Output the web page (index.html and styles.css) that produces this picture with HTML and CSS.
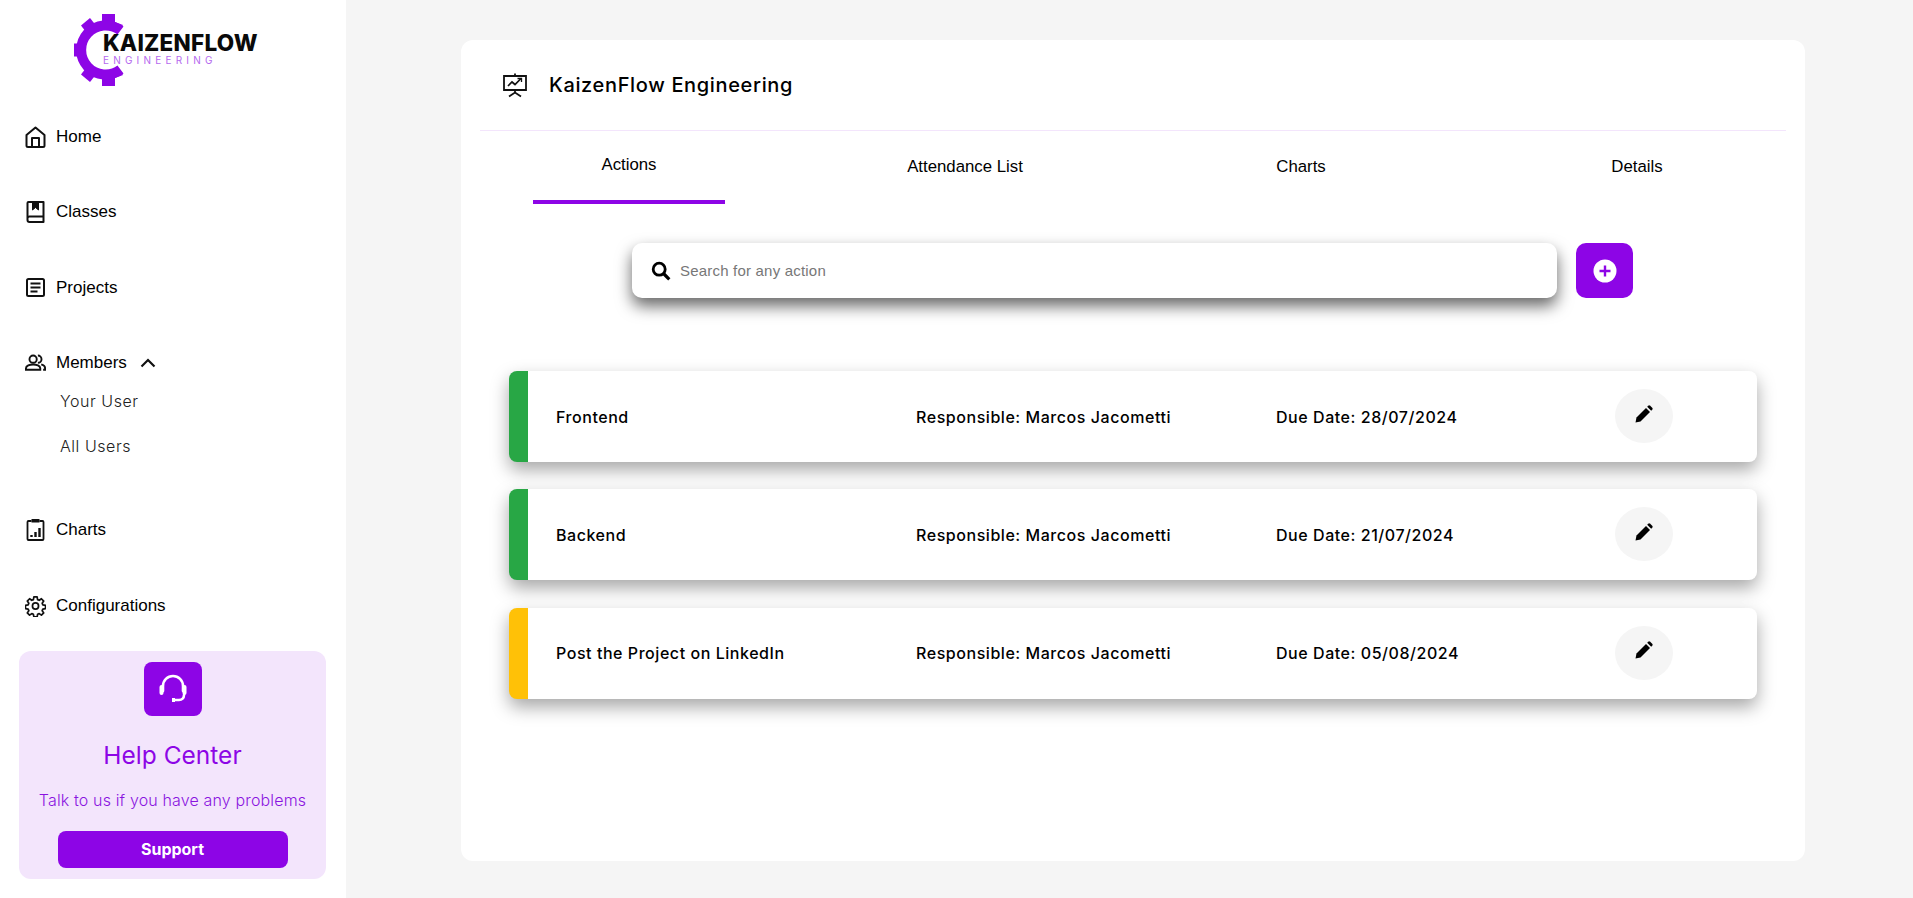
FILE: index.html

```html
<!DOCTYPE html>
<html lang="en">
<head>
  <meta charset="UTF-8" />
  <title>KaizenFlow Engineering</title>
  <link rel="stylesheet" href="styles.css">
</head>
<body>

  <aside class="sidebar">
    <div class="logo">
      <svg class="logo-gear" width="70" height="72" viewBox="0 0 70 72">
        <g fill="#8d05e6">
          <path d="M28 0h13v10H28z"/>
          <path d="M28 62h13v10H28z"/>
          <path d="M0 29.500h10v13H0z"/>
          <path d="M6 7.500l9-7.500 8 10-9 8z" transform="translate(1 4)"/>
          <path d="M6 64.500l9 7.500 8-10-9-8z" transform="translate(1 -4)"/>
          <path d="M41 8l8 3 -4 6-6-2z"/>
          <path d="M41 64l8-3-4-6-6 2z"/>
        </g>
        <path d="M46.500 16.500A24.500 24.500 0 1 0 46.500 55.500" fill="none" stroke="#8d05e6" stroke-width="10"/>
      </svg>
      <div class="logo-text">
        <span class="logo-name">KAIZENFLOW</span>
        <span class="logo-sub">ENGINEERING</span>
      </div>
    </div>

    <nav class="nav">
      <a class="nav-item">
        <svg class="nav-icon" viewBox="0 0 20 22" fill="none" stroke="#111" stroke-width="2" stroke-linejoin="round"><path d="M1 9 10 1.500 19 9v10.500a1.500 1.500 0 0 1-1.500 1.500h-15A1.500 1.500 0 0 1 1 19.500z"/><path d="M6.500 21v-9h7v9"/></svg>
        Home
      </a>
      <a class="nav-item">
        <svg class="nav-icon" viewBox="0 0 20 22" fill="none" stroke="#111" stroke-width="2" stroke-linejoin="round"><path d="M2 17V2a1 1 0 0 1 1-1h15v20H4a2 2 0 0 1-2-2v-2a2 2 0 0 1 2-1.500h14"/><path d="M7 1v8l3-2.500L13 9V1" fill="#111" stroke-width="1"/></svg>
        Classes
      </a>
      <a class="nav-item">
        <svg class="nav-icon" viewBox="0 0 20 22" fill="none" stroke="#111" stroke-width="2"><rect x="1.500" y="2" width="17" height="17" rx="1.500"/><path d="M5 6.500h10M5 10.500h10M5 14.500h7"/></svg>
        Projects
      </a>
      <a class="nav-item nav-members">
        <svg class="nav-icon" viewBox="0 0 22 20" fill="none" stroke="#111" stroke-width="2"><circle cx="8.500" cy="6" r="3.800"/><path d="M1 17v-1.500c0-2.500 4-4 7.500-4s7.500 1.500 7.500 4V17z"/><path d="M13.500 2.200a3.800 3.800 0 0 1 0 7.600"/><path d="M17 11.500c2 .6 4 1.800 4 3.500v2h-2"/></svg>
        Members
        <svg class="chevron" width="16" height="10" viewBox="0 0 16 10" fill="none" stroke="#111" stroke-width="2.200"><path d="M1.500 8.500 8 2l6.500 6.500"/></svg>
      </a>
      <div class="subnav">
        <a class="subnav-item">Your User</a>
        <a class="subnav-item">All Users</a>
      </div>
      <a class="nav-item nav-charts">
        <svg class="nav-icon" viewBox="0 0 20 22" fill="none" stroke="#111" stroke-width="1.800"><path d="M6 2H3a1 1 0 0 0-1 1v17a1 1 0 0 0 1 1h14a1 1 0 0 0 1-1V3a1 1 0 0 0-1-1h-3"/><rect x="6" y="0" width="8" height="3.500" fill="#111" stroke="none"/><path d="M6 18v-2M10 18v-5M14 18V9" stroke-width="2.400"/></svg>
        Charts
      </a>
      <a class="nav-item">
        <svg class="nav-icon" viewBox="1 1 22 22" fill="none" stroke="#111" stroke-width="1.800" stroke-linejoin="round"><circle cx="12" cy="12" r="3.200"/><path d="M10.300 2.500h3.400l.5 2.800 1.700.7 2.300-1.600 2.400 2.400-1.600 2.300.7 1.700 2.800.5v3.400l-2.800.5-.7 1.700 1.600 2.300-2.400 2.400-2.300-1.600-1.700.7-.5 2.800h-3.400l-.5-2.800-1.700-.7-2.300 1.600-2.400-2.400 1.600-2.300-.7-1.700-2.800-.5v-3.400l2.800-.5.7-1.700-1.600-2.300 2.400-2.400 2.300 1.600 1.700-.7z"/></svg>
        Configurations
      </a>
    </nav>

    <div class="help">
      <div class="help-icon">
        <svg width="32" height="32" viewBox="0 0 32 32" fill="none" stroke="#fff" stroke-width="2.600" stroke-linecap="round"><path d="M6 18v-5a10 10 0 0 1 20 0v5"/><path d="M4.500 14v6M27.500 14v6" stroke-width="4"/><path d="M27 22c0 3-2 5-5 5h-4"/><path d="M15 27h3" stroke-width="4" stroke-linecap="butt"/></svg>
      </div>
      <h3 class="help-title">Help Center</h3>
      <p class="help-text">Talk to us if you have any problems</p>
      <button class="help-btn">Support</button>
    </div>
  </aside>

  <main class="main">
    <section class="card">
      <header class="card-head">
        <svg class="card-icon" width="26" height="26" viewBox="0 0 26 26" fill="none" stroke="#111" stroke-width="1.800"><path d="M2 4h22v14H2z"/><path d="M13 4V1.500M13 18v2M7 24.500l6-4 6 4"/><path d="M6 14l4-4 3 2.500 6-6" stroke-width="1.700"/><path d="M15.500 6.500H19.500V10" stroke-width="1.300"/></svg>
        <h1 class="card-title">KaizenFlow Engineering</h1>
      </header>

      <div class="tabs">
        <a class="tab tab-active">Actions</a>
        <a class="tab">Attendance List</a>
        <a class="tab">Charts</a>
        <a class="tab">Details</a>
      </div>

      <div class="search-row">
        <label class="search">
          <svg width="20" height="20" viewBox="0 0 20 20" fill="none" stroke="#000" stroke-width="2.800"><circle cx="8.200" cy="8.200" r="6"/><path d="M12.500 12.500l5.800 5.800" stroke-width="3.200"/></svg>
          <input type="text" placeholder="Search for any action" />
        </label>
        <button class="add-btn">
          <svg width="24" height="24" viewBox="0 0 24 24"><circle cx="12" cy="12" r="11.500" fill="#fff"/><path d="M12 6.500v11M6.500 12h11" stroke="#8d05e6" stroke-width="2.400"/></svg>
        </button>
      </div>

      <div class="actions">
        <div class="action action-done">
          <span class="action-name">Frontend</span>
          <span class="action-resp">Responsible: Marcos Jacometti</span>
          <span class="action-due">Due Date: 28/07/2024</span>
          <button class="edit-btn"><svg width="18" height="18" viewBox="0 0 18 18"><path d="M0.500 17.500l1-5L11 3l4 4-9.500 9.500z"/><path d="M12.200 1.800l1-1a1.500 1.500 0 0 1 2 0l2 2a1.500 1.500 0 0 1 0 2l-1 1z"/></svg></button>
        </div>
        <div class="action action-done">
          <span class="action-name">Backend</span>
          <span class="action-resp">Responsible: Marcos Jacometti</span>
          <span class="action-due">Due Date: 21/07/2024</span>
          <button class="edit-btn"><svg width="18" height="18" viewBox="0 0 18 18"><path d="M0.500 17.500l1-5L11 3l4 4-9.500 9.500z"/><path d="M12.200 1.800l1-1a1.500 1.500 0 0 1 2 0l2 2a1.500 1.500 0 0 1 0 2l-1 1z"/></svg></button>
        </div>
        <div class="action action-pending">
          <span class="action-name">Post the Project on LinkedIn</span>
          <span class="action-resp">Responsible: Marcos Jacometti</span>
          <span class="action-due">Due Date: 05/08/2024</span>
          <button class="edit-btn"><svg width="18" height="18" viewBox="0 0 18 18"><path d="M0.500 17.500l1-5L11 3l4 4-9.500 9.500z"/><path d="M12.200 1.800l1-1a1.500 1.500 0 0 1 2 0l2 2a1.500 1.500 0 0 1 0 2l-1 1z"/></svg></button>
        </div>
      </div>
    </section>
  </main>

</body>
</html>
```

FILE: styles.css

```css
* {
  box-sizing: border-box;
}

body {
  margin: 0;
  height: 100vh;
  overflow: hidden;
  display: flex;
  font-family: 'Inter', 'Open Sans', sans-serif;
  background: #f5f5f5;
  color: #000;
}

.sidebar {
  width: 346px;
  flex-shrink: 0;
  background: #fff;
  display: flex;
  flex-direction: column;
}

.logo {
  height: 125px;
  padding: 14px 0 0 74px;
  display: flex;
  align-items: flex-start;
}

.logo-gear {
  flex-shrink: 0;
}

.logo-text {
  margin-left: -41px;
  padding-top: 18px;
  display: flex;
  flex-direction: column;
}

.logo-name {
  font-size: 22.500px;
  font-weight: 800;
  line-height: 22px;
  color: #0a0a0a;
  letter-spacing: 0.250px;
}

.logo-sub {
  font-size: 10px;
  line-height: 12px;
  color: #b569ee;
  letter-spacing: 4.200px;
}

.nav {
  padding-left: 25px;
  display: flex;
  flex-direction: column;
  font-family: 'Liberation Sans', Arial, sans-serif;
  font-size: 17px;
}

.nav-item {
  height: 24px;
  margin-bottom: 51.400px;
  display: flex;
  align-items: center;
  gap: 10px;
  color: #000;
}

.nav-icon {
  width: 21px;
  height: 22px;
  flex-shrink: 0;
}

.nav-members {
  margin-bottom: 14px;
}

.chevron {
  margin-left: 3px;
}

.subnav {
  padding-left: 35px;
  display: flex;
  flex-direction: column;
  gap: 21px;
  font-family: 'Inter', sans-serif;
  font-size: 16px;
  font-weight: 300;
  letter-spacing: 0.550px;
  color: #222;
}

.subnav-item {
  line-height: 24px;
}

.nav-charts {
  margin-top: 60px;
}

.nav .nav-item:last-child {
  margin-bottom: 33px;
}

.help {
  width: 307px;
  height: 228px;
  margin-left: 19px;
  padding-top: 11px;
  border-radius: 12px;
  background: #f3e5fc;
  display: flex;
  flex-direction: column;
  align-items: center;
  color: #8d05e6;
}

.help-icon {
  width: 58px;
  height: 54px;
  border-radius: 8px;
  background: #8d05e6;
  display: flex;
  align-items: center;
  justify-content: center;
}

.help-title {
  margin: 20px 0 0;
  font-size: 24.500px;
  line-height: 38px;
  font-weight: 400;
}

.help-text {
  margin: 13px 0 0;
  font-size: 16px;
  line-height: 26px;
  font-weight: 300;
  letter-spacing: 0.150px;
  color: #8a14e0;
  white-space: nowrap;
}

.help-btn {
  width: 230px;
  height: 37px;
  margin-top: 18px;
  border: none;
  border-radius: 8px;
  background: #8d05e6;
  color: #fff;
  font-family: 'Inter', sans-serif;
  font-size: 16px;
  font-weight: 700;
}

.main {
  flex: 1;
  padding: 40px 108px 37px 115px;
  display: flex;
}

.card {
  flex: 1;
  background: #fff;
  border-radius: 12px;
}

.card-head {
  height: 91px;
  margin: 0 19px;
  padding: 0 0 0 22px;
  display: flex;
  align-items: center;
  gap: 21px;
  border-bottom: 1px solid #f3e5fc;
}

.card-title {
  margin: 0;
  font-size: 20px;
  font-weight: 500;
  letter-spacing: 0.650px;
}

.tabs {
  display: grid;
  grid-template-columns: repeat(4, 1fr);
  height: 73px;
  font-family: 'Liberation Sans', Arial, sans-serif;
  font-size: 16.800px;
}

.tab {
  padding-top: 27px;
  text-align: center;
  line-height: 18px;
}

.tab-active {
  position: relative;
  padding-top: 25px;
}

.tab-active::after {
  content: "";
  position: absolute;
  left: 72px;
  bottom: 0;
  width: 192px;
  height: 4px;
  background: #8d05e6;
}

.search-row {
  margin-top: 39px;
  padding-left: 171px;
  display: flex;
  gap: 19px;
}

.search {
  width: 925px;
  height: 55px;
  padding-left: 19px;
  border-radius: 10px;
  background: #fff;
  box-shadow: 0 8px 16px rgba(0, 0, 0, 0.6);
  display: flex;
  align-items: center;
  gap: 7px;
}

.search input {
  flex: 1;
  border: none;
  outline: none;
  background: transparent;
  font-family: 'Liberation Sans', Arial, sans-serif;
  font-size: 15px;
  letter-spacing: 0.200px;
}

.search input::placeholder {
  color: #777;
}

.add-btn {
  width: 57px;
  height: 55px;
  border: none;
  border-radius: 10px;
  background: #8d05e6;
  display: flex;
  align-items: center;
  justify-content: center;
  padding: 0;
}

.actions {
  margin: 73px 0 0 48px;
  width: 1248px;
  display: flex;
  flex-direction: column;
  gap: 27.400px;
}

.action {
  height: 91px;
  padding-left: 28px;
  border-radius: 8px;
  border-left: 19px solid;
  background: #fff;
  box-shadow: 0 8px 18px rgba(0, 0, 0, 0.35);
  display: grid;
  grid-template-columns: 360px 360px 339px 58px;
  align-items: center;
  font-size: 16px;
  font-weight: 500;
  letter-spacing: 0.550px;
  white-space: nowrap;
}

.action-done {
  border-left-color: #28a745;
}

.action-pending {
  border-left-color: #ffc107;
}

.edit-btn {
  width: 58px;
  height: 54px;
  margin-top: -1px;
  border: none;
  border-radius: 50%;
  background: #f5f5f5;
  display: flex;
  align-items: center;
  justify-content: center;
  padding: 0 0 5px;
}
```
